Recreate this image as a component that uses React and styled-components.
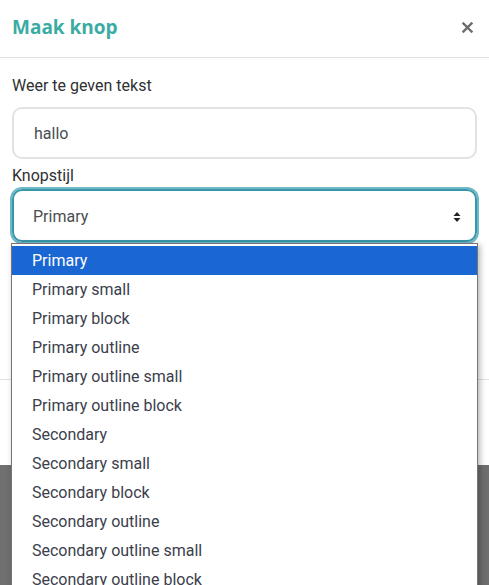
import React from "react";
import styled, { createGlobalStyle } from "styled-components";

const Global = createGlobalStyle`
  html, body { margin: 0; padding: 0; height: 100%; }
  body {
    background: #6f6f6f;
    overflow: hidden;
    font-family: Roboto, "Liberation Sans", sans-serif;
  }
`;

const Modal = styled.div`
  background: #fff;
  width: 100%;
`;

const Header = styled.div`
  height: 57px;
  border-bottom: 1px solid #dee2e6;
  display: flex;
  align-items: center;
  justify-content: space-between;
  padding: 0 16px 0 12px;
  box-sizing: content-box;
`;

const Title = styled.h5`
  margin: -3px 0 0;
  font-family: "Open Sans", "Liberation Sans", sans-serif;
  font-weight: 700;
  font-size: 19px;
  color: #3aaca4;
`;

const Close = styled.button`
  border: 0;
  background: none;
  padding: 0;
  width: 12px;
  height: 12px;
  display: flex;
  align-items: center;
  justify-content: center;
  margin-top: -2px;
`;

const Body = styled.div`
  padding: 18px 12px 0 12px;
  height: 321px;
  box-sizing: border-box;
`;

const Label = styled.div`
  font-size: 16px;
  line-height: 20px;
  color: #2f3133;
  margin-bottom: ${(p) => p.$mb}px;
`;

const Input = styled.div`
  height: 52px;
  box-sizing: border-box;
  border: 2px solid #e0e3e6;
  border-radius: 10px;
  display: flex;
  align-items: center;
  padding-left: 20px;
  font-size: 16px;
  color: #4a4d50;
  margin-bottom: 7px;
`;

const SelectWrap = styled.div`
  position: relative;
`;

const Select = styled.div`
  height: 53px;
  box-sizing: border-box;
  border: 2px solid #3796a9;
  box-shadow: 0 0 0 2px #6fb8c6;
  border-radius: 10px;
  display: flex;
  align-items: center;
  justify-content: space-between;
  padding: 2px 14px 0 19px;
  font-size: 16px;
  color: #4a4d50;
`;

const List = styled.ul`
  position: absolute;
  top: calc(100% + 1px);
  left: -1px;
  right: -1px;
  margin: 0;
  padding: 2px 0 0;
  list-style: none;
  background: #fff;
  border: 1px solid #767676;
  box-shadow: 2px 2px 6px rgba(0, 0, 0, 0.3);
  z-index: 5;
`;

const Item = styled.li`
  height: 29px;
  display: flex;
  align-items: center;
  padding-left: 20px;
  font-size: 16px;
  color: ${(p) => (p.$active ? "#fff" : "#3b404c")};
  background: ${(p) => (p.$active ? "#1a66d3" : "transparent")};
`;

const Footer = styled.div`
  border-top: 1px solid #dee2e6;
  height: 85px;
`;

const options = [
  "Primary",
  "Primary small",
  "Primary block",
  "Primary outline",
  "Primary outline small",
  "Primary outline block",
  "Secondary",
  "Secondary small",
  "Secondary block",
  "Secondary outline",
  "Secondary outline small",
  "Secondary outline block",
];

export default function App() {
  return (
    <>
      <Global />
      <Modal>
        <Header>
          <Title>Maak knop</Title>
          <Close aria-label="Sluiten">
            <svg width="11" height="11" viewBox="0 0 11 11">
              <path d="M1.5 1.5 L9.5 9.5 M9.5 1.5 L1.5 9.5" stroke="#6c6c6c" strokeWidth="2.4" strokeLinecap="square" />
            </svg>
          </Close>
        </Header>
        <Body>
          <Label $mb={11}>Weer te geven tekst</Label>
          <Input>hallo</Input>
          <Label $mb={3}>Knopstijl</Label>
          <SelectWrap>
            <Select>
              <span>Primary</span>
              <svg width="8" height="12" viewBox="0 0 8 12">
                <path d="M4 1 L7.5 5 L0.5 5 Z M4 11 L7.5 7 L0.5 7 Z" fill="#222" />
              </svg>
            </Select>
            <List>
              {options.map((o, i) => (
                <Item key={o} $active={i === 0}>
                  {o}
                </Item>
              ))}
            </List>
          </SelectWrap>
        </Body>
        <Footer />
      </Modal>
    </>
  );
}
